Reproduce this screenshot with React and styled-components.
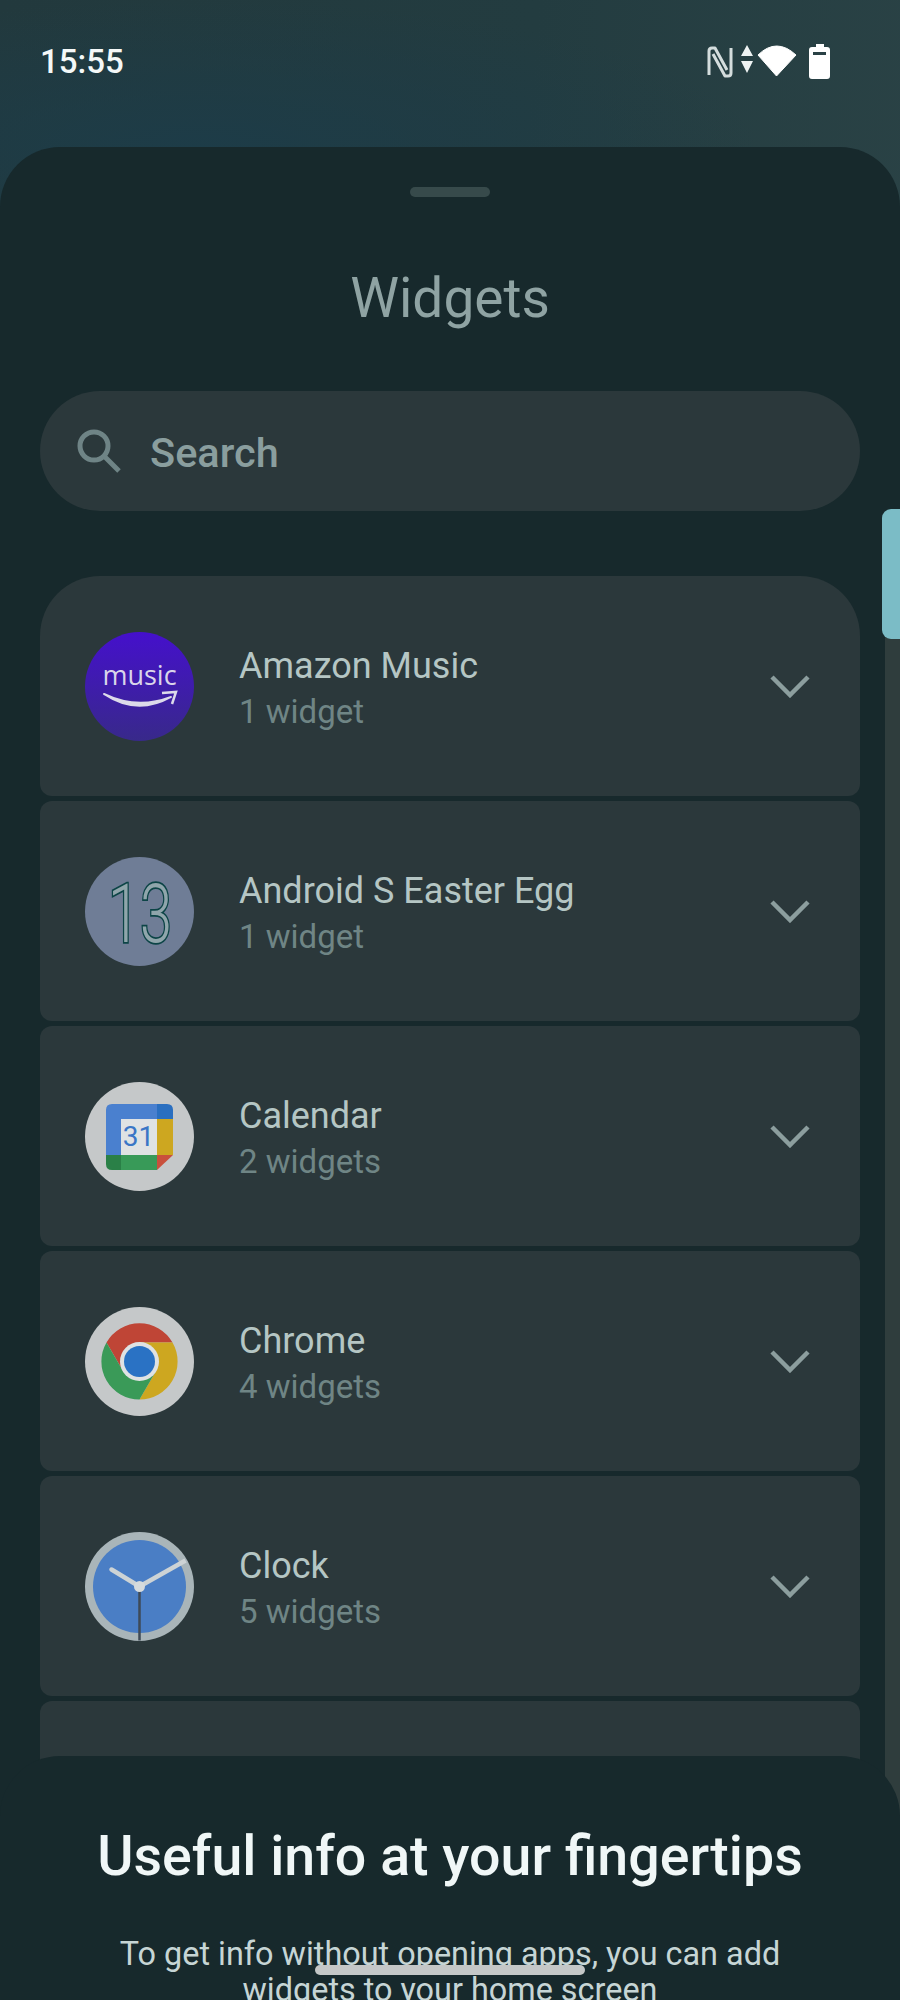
import React from "react";
import styled, { createGlobalStyle } from "styled-components";

const GlobalStyle = createGlobalStyle`
  html, body {
    margin: 0;
    padding: 0;
    background: #17292c;
  }
  * {
    box-sizing: border-box;
  }
`;

const Screen = styled.div`
  position: relative;
  width: 900px;
  height: 2000px;
  overflow: hidden;
  font-family: Roboto, "Noto Sans", sans-serif;
  background: radial-gradient(ellipse 560px 150px at 200px 150px, #1d3c48 0%, rgba(29, 60, 72, 0) 100%),
    linear-gradient(95deg, #22393d 0%, #233c40 50%, #2c4447 100%);
`;

const StatusBar = styled.div`
  height: 147px;
  padding: 41px 70px 0 40px;
  display: flex;
  justify-content: space-between;
  align-items: flex-start;
`;

const Time = styled.div`
  color: #f4f8f8;
  font-size: 33px;
  line-height: 42px;
  font-weight: 500;
`;

const StatusIcons = styled.svg`
  display: block;
  margin-top: 2px;
`;

const Sheet = styled.div`
  position: relative;
  height: 1853px;
  background: #17292c;
  border-radius: 60px 60px 0 0;
  padding-top: 40px;
`;

const Handle = styled.div`
  width: 80px;
  height: 10px;
  margin: 0 auto;
  border-radius: 5px;
  background: #374a4b;
`;

const Title = styled.h1`
  margin: 65px 0 0;
  height: 72px;
  line-height: 72px;
  text-align: center;
  font-size: 55px;
  font-weight: 400;
  color: #8fa3a3;
`;

const SearchBar = styled.div`
  margin: 57px 40px 0;
  height: 120px;
  border-radius: 60px;
  background: #2b383b;
  display: flex;
  align-items: center;
  padding-left: 35px;
  gap: 27px;
`;

const SearchText = styled.span`
  padding-top: 2px;
  font-size: 41.5px;
  font-weight: 500;
  color: #8a9e9e;
`;

const List = styled.div`
  margin: 65px 40px 0;
  display: flex;
  flex-direction: column;
  gap: 5px;
`;

const Row = styled.div`
  height: 220px;
  flex: none;
  padding: 56px 50px 0 45px;
  display: flex;
  align-items: flex-start;
  background: #2b383b;
  border-radius: ${(p) => (p.$first ? "60px 60px 12px 12px" : "12px")};
`;

const AppIcon = styled.svg`
  display: block;
  flex: none;
`;

const RowText = styled.div`
  flex: 1;
  margin-left: 45px;
  padding-top: 12px;
`;

const RowTitle = styled.div`
  font-size: 36px;
  line-height: 44px;
  color: #b5c6c4;
`;

const RowSub = styled.div`
  margin-top: 3px;
  font-size: 33px;
  line-height: 42px;
  color: #6f8585;
`;

const Chevron = styled.svg`
  display: block;
  flex: none;
  margin-top: 42px;
`;

const ScrollTrack = styled.div`
  position: absolute;
  top: 375px;
  right: 0;
  width: 15px;
  height: 1300px;
  background: #2f3d3d;
`;

const ScrollThumb = styled.div`
  position: absolute;
  top: 362px;
  right: 0;
  width: 18px;
  height: 130px;
  border-radius: 9px 0 0 9px;
  background: #7bbcc6;
`;

const InfoSheet = styled.div`
  position: absolute;
  left: 0;
  right: 0;
  top: 1756px;
  height: 244px;
  background: #17292c;
  border-radius: 60px 60px 0 0;
  padding-top: 68px;
  text-align: center;
`;

const InfoTitle = styled.h2`
  margin: 0;
  font-size: 55.5px;
  line-height: 66px;
  font-weight: 500;
  color: #f0f7f7;
`;

const InfoBody = styled.p`
  margin: 46px 0 0;
  font-size: 32.4px;
  line-height: 36px;
  color: #c6d5d5;
`;

const HomeIndicator = styled.div`
  position: absolute;
  left: 315px;
  top: 1965px;
  width: 270px;
  height: 10px;
  border-radius: 5px;
  background: #c4c7c7;
`;

const StatusGlyphs = () => (
  <StatusIcons width="124" height="36" viewBox="0 0 124 36">
    <g fill="none" stroke="#e8eeee" strokeWidth="3" strokeLinejoin="round">
      <path d="M3 32 V8 q0 -3 3 -3 h3 L21 27" opacity="0.9" />
      <path d="M25 5 V30 q0 3 -3 3 h-3 L7 11" opacity="0.9" />
    </g>
    <path d="M41 2 l6 11 h-12 z M41 30 l-6 -12 h12 z" fill="#eef3f3" />
    <path d="M52 12 Q70.5 -6 90 12 L70.5 33 Z" fill="#ffffff" strokeLinejoin="round" stroke="#ffffff" strokeWidth="1" />
    <path d="M110 1 h8 v3 h3 q3 0 3 3 v26 q0 3 -3 3 h-15 q-3 0 -3 -3 V7 q0 -3 3 -3 h4 z" fill="#ffffff" />
    <rect x="107" y="9" width="13" height="3" fill="#2a4145" />
  </StatusIcons>
);

const AmazonIcon = () => (
  <AppIcon width="109" height="109" viewBox="0 0 109 109">
    <defs>
      <linearGradient id="amz" x1="0" y1="0" x2="0" y2="1">
        <stop offset="0" stopColor="#4510cc" />
        <stop offset="1" stopColor="#38298a" />
      </linearGradient>
    </defs>
    <circle cx="54.5" cy="54.5" r="54.5" fill="url(#amz)" />
    <text x="54.5" y="53" textAnchor="middle" fontFamily="Open Sans, sans-serif" fontSize="27" fontWeight="500" fill="#d9d5ea">
      music
    </text>
    <path d="M19 62 Q52 84 86 65 Q52 78 19 62 Z" fill="#dcdaea" stroke="#dcdaea" strokeWidth="2" strokeLinejoin="round" />
    <path d="M77 61 L91 60 L87 72" fill="none" stroke="#dcdaea" strokeWidth="2.5" />
  </AppIcon>
);

const AndroidIcon = () => (
  <AppIcon width="109" height="109" viewBox="0 0 109 109">
    <circle cx="54.5" cy="54.5" r="54.5" fill="#6f7d96" />
    <text
      x="55"
      y="85"
      textAnchor="middle"
      fontFamily="Roboto, sans-serif"
      fontSize="82"
      fontWeight="300"
      fill="#8fa5ab"
      stroke="#0c4446"
      strokeWidth="3.5"
      textLength="64"
      lengthAdjust="spacingAndGlyphs"
      style={{ paintOrder: "stroke" }}
    >
      13
    </text>
  </AppIcon>
);

const CalendarIcon = () => (
  <AppIcon width="109" height="109" viewBox="0 0 109 109">
    <circle cx="54.5" cy="54.5" r="54.5" fill="#c5c8c9" />
    <path d="M21 28 q0 -6 6 -6 h45 v15 H36 v36 H21 z" fill="#4a80cf" />
    <path d="M72 22 h10 q6 0 6 6 v9 H72 z" fill="#2a6fc0" />
    <rect x="72" y="37" width="16" height="36" fill="#cda720" />
    <path d="M36 73 h36 v15 H36 z" fill="#389a58" />
    <path d="M21 73 h15 v15 h-9 q-6 0 -6 -6 z" fill="#2a8047" />
    <path d="M72 73 h16 L72 88 z" fill="#c9503c" />
    <rect x="36" y="37" width="36" height="36" fill="#dfe2e3" />
    <text x="53.5" y="64" textAnchor="middle" fontFamily="Roboto, sans-serif" fontSize="28" fontWeight="400" fill="#3a76c6">
      31
    </text>
  </AppIcon>
);

const ChromeIcon = () => (
  <AppIcon width="109" height="109" viewBox="-54.5 -54.5 109 109">
    <circle r="54.5" fill="#c5c8c9" />
    <path d="M-33 -19 A38 38 0 0 1 33 -19 L0 -19 L-16.5 9.5 Z" fill="#bf4536" />
    <path d="M33 -19 A38 38 0 0 1 0 38 L16.5 9.5 L0 -19 Z" fill="#cda720" />
    <path d="M0 38 A38 38 0 0 1 -33 -19 L-16.5 9.5 L16.5 9.5 Z" fill="#3a9a58" />
    <circle r="19.5" fill="#dfe2e3" />
    <circle r="15.5" fill="#2a72c4" />
  </AppIcon>
);

const ClockIcon = () => (
  <AppIcon width="109" height="109" viewBox="-54.5 -54.5 109 109">
    <circle r="54.5" fill="#a9b5b9" />
    <circle r="46.5" fill="#4a7ec5" />
    <line x1="0" y1="0" x2="0" y2="54" stroke="#3e4a56" strokeWidth="2.5" />
    <line x1="0" y1="0" x2="46" y2="-26" stroke="#cdd3d5" strokeWidth="4.5" />
    <line x1="0" y1="0" x2="-28" y2="-17" stroke="#cdd3d5" strokeWidth="4.5" strokeLinecap="round" />
    <circle r="5.5" fill="#d6dbdd" />
  </AppIcon>
);

const APPS = [
  { name: "Amazon Music", count: "1 widget", Icon: AmazonIcon },
  { name: "Android S Easter Egg", count: "1 widget", Icon: AndroidIcon },
  { name: "Calendar", count: "2 widgets", Icon: CalendarIcon },
  { name: "Chrome", count: "4 widgets", Icon: ChromeIcon },
  { name: "Clock", count: "5 widgets", Icon: ClockIcon },
];

const App = () => {
  return (
    <Screen>
      <GlobalStyle />
      <StatusBar>
        <Time>15:55</Time>
        <StatusGlyphs />
      </StatusBar>
      <Sheet>
        <Handle />
        <Title>Widgets</Title>
        <SearchBar>
          <svg width="48" height="48" viewBox="0 0 48 48" fill="none" stroke="#6f8486" strokeWidth="5">
            <circle cx="19" cy="19" r="14" />
            <path d="M29 29 L44 44" />
          </svg>
          <SearchText>Search</SearchText>
        </SearchBar>
        <List>
          {APPS.map(({ name, count, Icon }, i) => (
            <Row key={name} $first={i === 0}>
              <Icon />
              <RowText>
                <RowTitle>{name}</RowTitle>
                <RowSub>{count}</RowSub>
              </RowText>
              <Chevron width="40" height="24" viewBox="0 0 40 24" fill="none" stroke="#8c9e9e" strokeWidth="4.5">
                <path d="M2 3 L20 21 L38 3" />
              </Chevron>
            </Row>
          ))}
          <Row />
        </List>
        <ScrollTrack />
        <ScrollThumb />
      </Sheet>
      <InfoSheet>
        <InfoTitle>Useful info at your fingertips</InfoTitle>
        <InfoBody>
          To get info without opening apps, you can add
          <br />
          widgets to your home screen
        </InfoBody>
      </InfoSheet>
      <HomeIndicator />
    </Screen>
  );
};

export default App;
